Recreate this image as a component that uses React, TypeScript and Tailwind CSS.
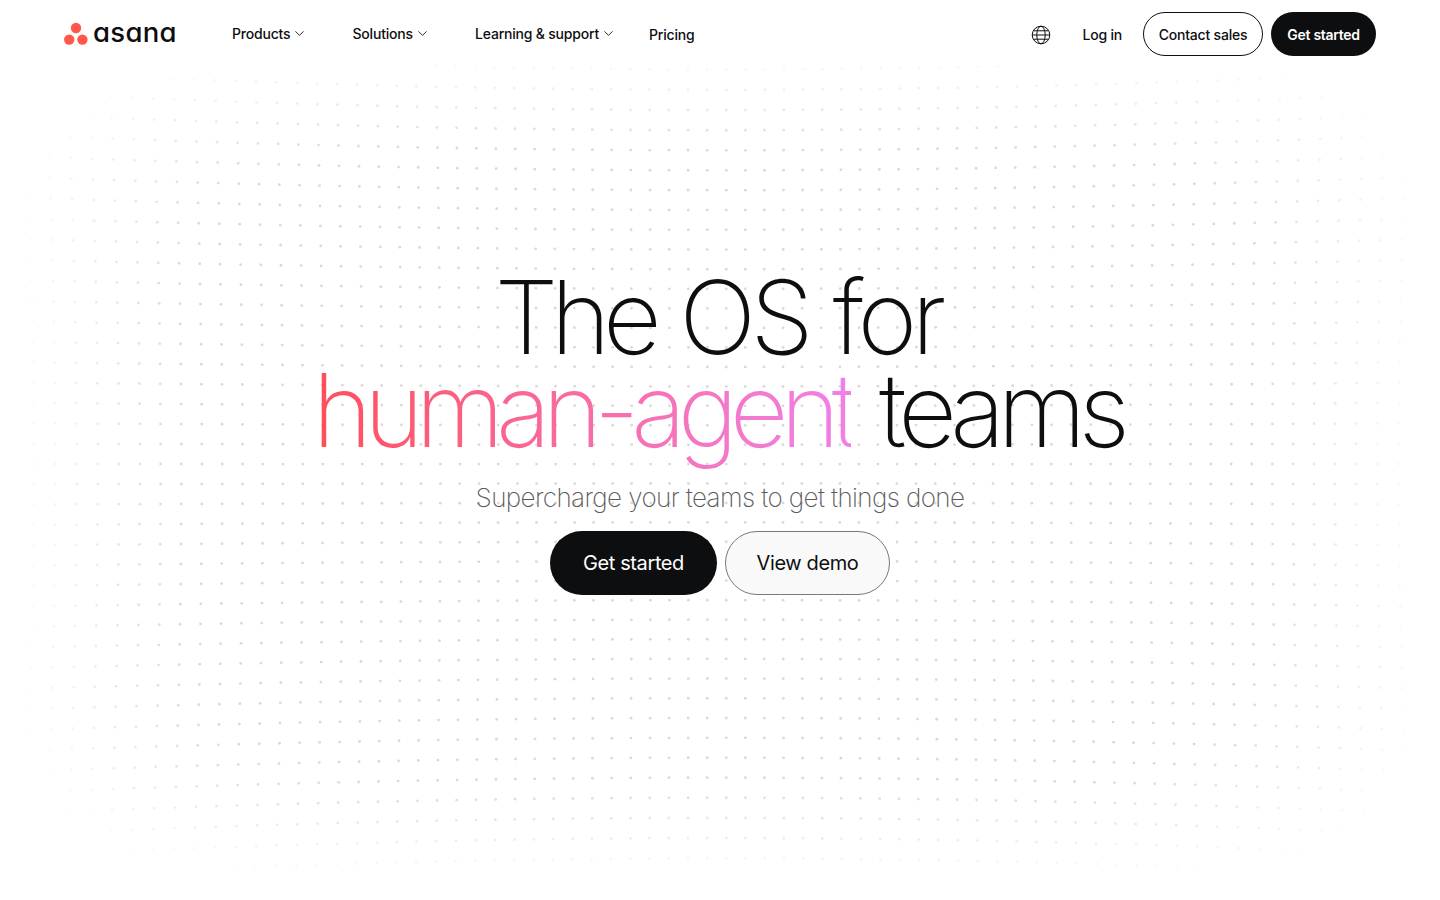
import React from 'react';
import { ChevronDown } from 'lucide-react';

const navFont = "font-['Inter','Liberation_Sans',sans-serif]";

// dot field, slightly bulged away from the centre
const dots: { x: number; y: number; o: number }[] = [];
const cx = 720;
const cy = 467;
const k = 1.1e-7;
for (let i = -42; i <= 42; i++) {
  for (let j = -26; j <= 26; j++) {
    const ux = (i + 0.33) * 18.9;
    const uy = (j - 0.15) * 19.4;
    const m = 1 + k * (ux * ux + uy * uy);
    const x = cx + ux * m;
    const y = cy + uy * m;
    const d = (Math.abs((x - cx) / 712) ** 6 + Math.abs((y - cy) / 420) ** 6) ** (1 / 6);
    const o = d >= 1 || y < 66 || y > 868 ? 0 : Math.min(1, (1 - d) / 0.25);
    if (o > 0.02) dots.push({ x, y, o });
  }
}

function DotField() {
  return (
    <svg className="absolute inset-0 w-full h-full" width="1440" height="900" viewBox="0 0 1440 900">
      {dots.map((d, i) => (
        <circle key={i} cx={d.x} cy={d.y} r="1.4" fill="#d9d9d9" opacity={d.o} />
      ))}
    </svg>
  );
}

function NavItem({ label, width }: { label: string; width: string }) {
  return (
    <div className={`flex items-center gap-0.5 text-[14px] font-medium tracking-[-0.2px] text-[#0d0e10] -mt-0.5 ${width}`}>
      <span>{label}</span>
      <ChevronDown size={15} strokeWidth={1.4} />
    </div>
  );
}

export default function App() {
  return (
    <div className={`relative h-[900px] overflow-hidden bg-white ${navFont}`}>
      <DotField />

      <header className="relative flex items-center justify-between h-[68px] pl-16 pr-16">
        <div className="flex items-center">
          <div className="flex items-center gap-[5px] w-[168px]">
            <svg width="24" height="24" viewBox="0 0 24 24">
              <circle cx="12" cy="6" r="5.2" fill="#ff584a" />
              <circle cx="5.2" cy="17.6" r="5.2" fill="#ff584a" />
              <circle cx="18.4" cy="17.6" r="5.2" fill="#ff584a" />
            </svg>
            <span className="text-[27.5px] leading-none font-medium tracking-[0.3px] text-[#0d0e10] -mt-0.5 [font-feature-settings:'cv11']">
              asana
            </span>
          </div>
          <NavItem label="Products" width="w-[120.5px]" />
          <NavItem label="Solutions" width="w-[122.5px]" />
          <NavItem label="Learning & support" width="w-[174px]" />
          <span className="text-[14px] font-medium tracking-[-0.2px] text-[#0d0e10]">Pricing</span>
        </div>

        <div className="flex items-center">
          <svg width="20" height="20" viewBox="0 0 20 20" fill="none" stroke="#0d0e10" strokeWidth="1" className="mt-0.5">
            <circle cx="10" cy="10" r="8.8" />
            <ellipse cx="10" cy="10" rx="4.2" ry="8.8" />
            <path d="M1.2 10h17.6M2.6 5.8h14.8M2.6 14.2h14.8" />
          </svg>
          <span className="ml-[31px] text-[14px] font-medium tracking-[-0.2px] text-[#0d0e10]">Log in</span>
          <button className="ml-[21px] h-11 w-[120px] rounded-full border border-[#0d0e10] bg-white text-[14px] font-medium tracking-[-0.2px] text-[#0d0e10]">
            Contact sales
          </button>
          <button className="ml-2 h-11 w-[105px] rounded-full bg-[#0d0e10] text-[14px] font-semibold tracking-[-0.3px] text-white">
            Get started
          </button>
        </div>
      </header>

      <main className="relative flex flex-col items-center pt-[203px]">
        <h1 className="pr-[5px] text-[102px] leading-[93px] font-extralight text-center text-[#0d0e10]">
          <span className="block tracking-[-5.8px] [word-spacing:2px]">
            <span className="tracking-[-7.5px]">The</span> OS for
          </span>
          <span className="block tracking-[-7.6px] [word-spacing:7px]">
            <span className="bg-gradient-to-r from-[#ff4d57] to-[#f080e8] bg-clip-text text-transparent tracking-[-8.3px]">human-agent</span>{' '}
            teams
          </span>
        </h1>
        <p className="mt-[24px] text-[26px] leading-[34px] font-extralight tracking-[-0.6px] text-[#5a5b5c]">
          Supercharge your teams to get things done
        </p>
        <div className="mt-4 flex gap-2">
          <button className="h-16 w-[167px] rounded-full bg-[#0d0e10] text-[20px] font-normal tracking-[-0.4px] text-white">
            Get started
          </button>
          <button className="h-16 w-[165px] rounded-full border border-[#77787a] bg-[#f9f9f9] text-[20px] font-normal tracking-[-0.4px] text-[#0d0e10]">
            View demo
          </button>
        </div>
      </main>
    </div>
  );
}
